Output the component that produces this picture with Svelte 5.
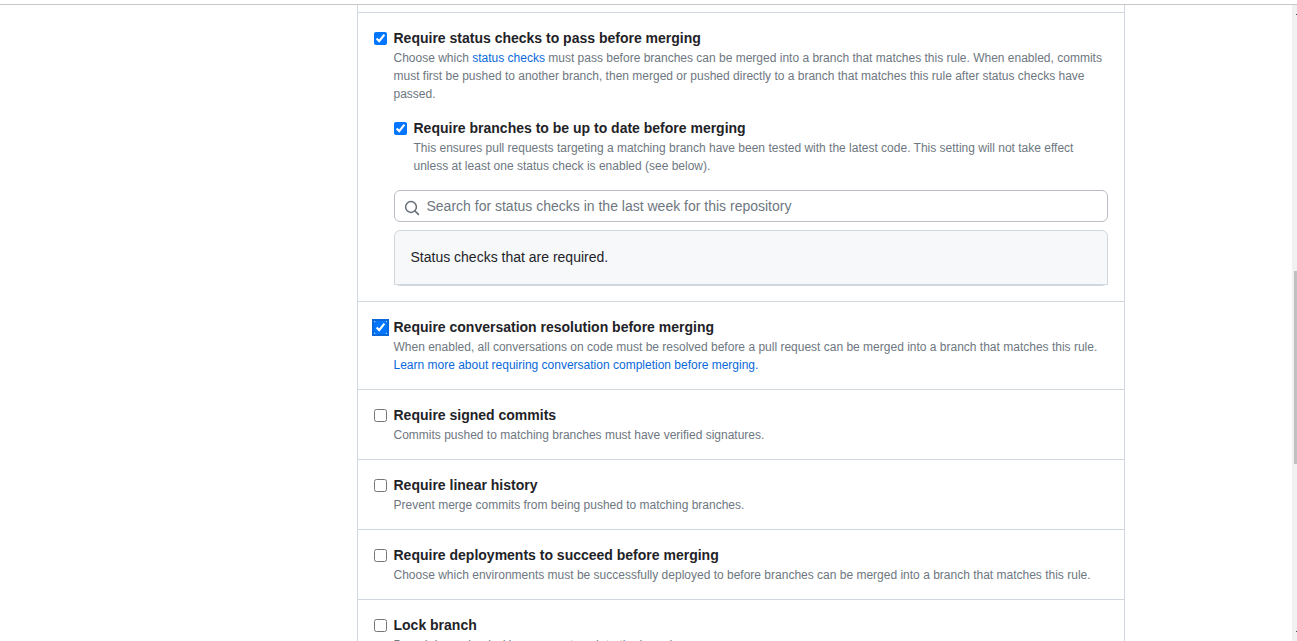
<script>
  let strict = $state(true);
  let statusChecks = $state(true);
  let query = $state('');
  let rules = $state([
    {
      id: 'conversation',
      title: 'Require conversation resolution before merging',
      text: 'When enabled, all conversations on code must be resolved before a pull request can be merged into a branch that matches this rule.',
      link: 'Learn more about requiring conversation completion before merging.',
      checked: true,
      current: true
    },
    { id: 'signed', title: 'Require signed commits', text: 'Commits pushed to matching branches must have verified signatures.', checked: false },
    { id: 'linear', title: 'Require linear history', text: 'Prevent merge commits from being pushed to matching branches.', checked: false },
    {
      id: 'deployments',
      title: 'Require deployments to succeed before merging',
      text: 'Choose which environments must be successfully deployed to before branches can be merged into a branch that matches this rule.',
      checked: false
    },
    { id: 'lock', title: 'Lock branch', text: 'Branch is read-only. Users cannot push to the branch.', checked: false }
  ]);
</script>

<div class="page">
  <header></header>
  <div class="viewport">
    <div class="container">
      <main>
        <section class="rule">
          <div class="option">
            <input id="status" type="checkbox" bind:checked={statusChecks} />
            <div class="body">
              <label for="status">Require status checks to pass before merging</label>
              <p>
                Choose which <a href="#status-checks">status checks</a> must pass before branches can be merged into a branch
                that matches this rule. When enabled, commits must first be pushed to another branch, then merged or pushed
                directly to a branch that matches this rule after status checks have passed.
              </p>
            </div>
          </div>
          <div class="nested">
            <div class="option">
              <input id="strict" type="checkbox" bind:checked={strict} />
              <div class="body">
                <label for="strict">Require branches to be up to date before merging</label>
                <p>
                  This ensures pull requests targeting a matching branch have been tested with the latest code. This setting
                  will not take effect unless at least one status check is enabled (see below).
                </p>
              </div>
            </div>
            <div class="search">
              <svg viewBox="0 0 16 16" width="16" height="16" aria-hidden="true">
                <circle cx="7" cy="7" r="5.4" fill="none" stroke="#656d76" stroke-width="1.5" />
                <path d="M11 11l3.4 3.4" stroke="#656d76" stroke-width="1.6" stroke-linecap="round" />
              </svg>
              <input
                type="text"
                bind:value={query}
                aria-label="Search for status checks"
                placeholder="Search for status checks in the last week for this repository"
              />
            </div>
            <div class="required"><div class="required-head">Status checks that are required.</div></div>
          </div>
        </section>
        {#each rules as rule (rule.id)}
          <section class="rule">
            <div class="option">
              <input id={rule.id} type="checkbox" class:current={rule.current} bind:checked={rule.checked} />
              <div class="body">
                <label for={rule.id}>{rule.title}</label>
                <p>
                  {rule.text}
                  {#if rule.link}<a href="#learn-more">{rule.link}</a>{/if}
                </p>
              </div>
            </div>
          </section>
        {/each}
      </main>
    </div>
    <div class="scrollbar">
      <span class="arrow"></span>
      <div class="thumb"></div>
      <span class="arrow"></span>
    </div>
  </div>
</div>

<style>
  :global(body) {
    margin: 0;
    background: #fff;
  }
  .page {
    display: flex;
    flex-direction: column;
    height: 100vh;
    overflow: hidden;
    font: 14px/21px 'Liberation Sans', Arial, sans-serif;
    color: #1f2328;
  }
  .page * {
    box-sizing: border-box;
  }
  header {
    flex: none;
    height: 5px;
    border-bottom: 1px solid #c8c8c8;
  }
  .viewport {
    display: flex;
    flex: 1;
    min-height: 0;
    overflow: hidden;
  }
  .container {
    flex: 1;
    min-width: 0;
  }
  main {
    max-width: 959px;
    margin: 0 auto;
    padding: 0 1px 0 190px;
  }
  main::before {
    content: '';
    display: block;
    height: 7px;
    border: solid #d0d7de;
    border-width: 0 1px;
  }
  .rule {
    padding: 15px 16px;
    border: solid #d0d7de;
    border-width: 1px 1px 0;
  }
  .option {
    display: flex;
    align-items: flex-start;
    gap: 7px;
  }
  .body {
    flex: 1;
    min-width: 0;
  }
  input[type='checkbox'] {
    flex: none;
    width: 13px;
    height: 13px;
    margin: 4px 0 0;
  }
  input.current {
    border-radius: 0;
    outline: 2px solid #0969da;
    outline-offset: 0;
  }
  label {
    display: block;
    width: fit-content;
    font-weight: 600;
  }
  p {
    margin: 0;
    font-size: 12px;
    line-height: 18px;
    color: #6e7781;
  }
  a {
    color: #0969da;
    text-decoration: none;
  }
  .nested {
    margin: 15px 0 0 20px;
  }
  .search {
    display: flex;
    align-items: center;
    gap: 7px;
    height: 32px;
    margin: 15px 0 8px;
    padding: 0 9px;
    border: 1px solid #b9bdc5;
    border-radius: 6px;
  }
  .search svg {
    flex: none;
    margin-top: 3px;
  }
  .search input {
    flex: 1;
    min-width: 0;
    padding: 0;
    border: 0;
    outline: 0;
    background: none;
    font: inherit;
    color: inherit;
  }
  .search input::placeholder {
    color: #6e7781;
    opacity: 1;
  }
  .required {
    border: solid #d0d7de;
    border-width: 0 0 1px;
    border-radius: 6px;
  }
  .required-head {
    padding: 16px;
    background: #f6f8fa;
    border: 1px solid #d0d7de;
    border-radius: 6px 6px 0 0;
  }
  .scrollbar {
    display: flex;
    flex: none;
    flex-direction: column;
    width: 5px;
    padding: 9px 0 9px 2px;
    background: #f1f1f1;
  }
  .arrow {
    flex: none;
    align-self: flex-end;
    width: 1px;
    height: 1px;
    background: #505050;
  }
  .thumb {
    flex: none;
    height: 193px;
    margin: 256px 0 auto;
    background: #c1c1c1;
  }
</style>
